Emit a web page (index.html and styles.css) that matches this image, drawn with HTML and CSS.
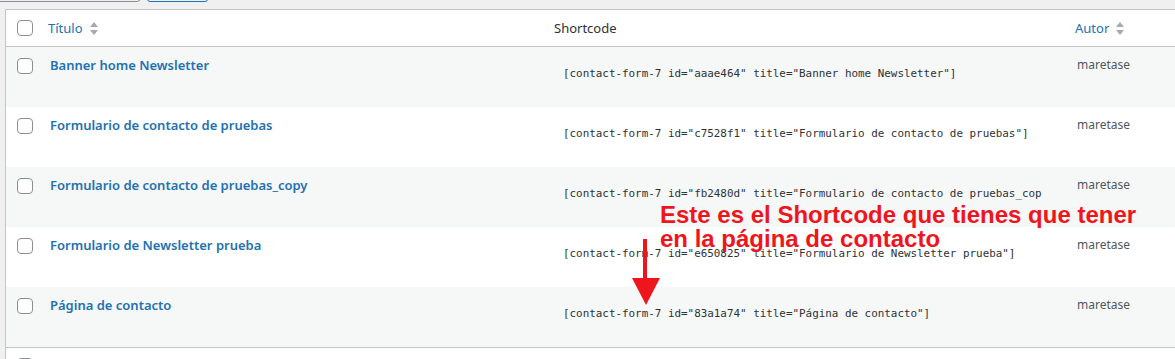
FILE: index.html
```html
<!DOCTYPE html>
<html lang="es">
<head>
    <meta charset="UTF-8">
    <title>Formularios de contacto</title>
    <link rel="stylesheet" href="styles.css">
</head>
<body>
    <div class="tablenav">
        <span class="search-input"></span>
        <span class="search-button"></span>
    </div>

    <div class="list-table">
        <div class="row head">
            <div class="cell check"><span class="cb"></span></div>
            <div class="cell title">
                <a href="#">Título</a>
                <svg class="sort" width="8" height="14" viewBox="0 0 8 14"><path d="M4 0 L8 5 L0 5 Z M0 8 L8 8 L4 13 Z" fill="#a7aaad"/></svg>
            </div>
            <div class="cell shortcode">Shortcode</div>
            <div class="cell author">
                <a href="#">Autor</a>
                <svg class="sort" width="8" height="14" viewBox="0 0 8 14"><path d="M4 0 L8 5 L0 5 Z M0 8 L8 8 L4 13 Z" fill="#a7aaad"/></svg>
            </div>
        </div>

        <div class="row item alt">
            <div class="cell check"><span class="cb"></span></div>
            <div class="cell title"><a href="#">Banner home Newsletter</a></div>
            <div class="cell shortcode"><span class="code">[contact-form-7 id="aaae464" title="Banner home Newsletter"]</span></div>
            <div class="cell author">maretase</div>
        </div>
        <div class="row item">
            <div class="cell check"><span class="cb"></span></div>
            <div class="cell title"><a href="#">Formulario de contacto de pruebas</a></div>
            <div class="cell shortcode"><span class="code">[contact-form-7 id="c7528f1" title="Formulario de contacto de pruebas"]</span></div>
            <div class="cell author">maretase</div>
        </div>
        <div class="row item alt">
            <div class="cell check"><span class="cb"></span></div>
            <div class="cell title"><a href="#">Formulario de contacto de pruebas_copy</a></div>
            <div class="cell shortcode"><span class="code">[contact-form-7 id="fb2480d" title="Formulario de contacto de pruebas_copy"]</span></div>
            <div class="cell author">maretase</div>
        </div>
        <div class="row item">
            <div class="cell check"><span class="cb"></span></div>
            <div class="cell title"><a href="#">Formulario de Newsletter prueba</a></div>
            <div class="cell shortcode"><span class="code">[contact-form-7 id="e650825" title="Formulario de Newsletter prueba"]</span></div>
            <div class="cell author">maretase</div>
        </div>
        <div class="row item alt">
            <div class="cell check"><span class="cb"></span></div>
            <div class="cell title"><a href="#">Página de contacto</a></div>
            <div class="cell shortcode"><span class="code">[contact-form-7 id="83a1a74" title="Página de contacto"]</span></div>
            <div class="cell author">maretase</div>
        </div>

        <div class="row head foot">
            <div class="cell check"><span class="cb"></span></div>
            <div class="cell title">
                <a href="#">Título</a>
                <svg class="sort" width="8" height="14" viewBox="0 0 8 14"><path d="M4 0 L8 5 L0 5 Z M0 8 L8 8 L4 13 Z" fill="#a7aaad"/></svg>
            </div>
            <div class="cell shortcode">Shortcode</div>
            <div class="cell author">
                <a href="#">Autor</a>
                <svg class="sort" width="8" height="14" viewBox="0 0 8 14"><path d="M4 0 L8 5 L0 5 Z M0 8 L8 8 L4 13 Z" fill="#a7aaad"/></svg>
            </div>
        </div>
    </div>

    <!-- nota en rojo encima de la captura -->
    <div class="note">
        <p>Este es el Shortcode que tienes que tener<br>en la página de contacto</p>
        <svg class="arrow" width="30" height="68" viewBox="0 0 30 68"><rect x="12" y="0" width="4" height="40" fill="#ee151d"/><path d="M1 39 L29 39 L15 66 Z" fill="#ee151d"/></svg>
    </div>
</body>
</html>
```

FILE: styles.css
```css
body {
    margin: 0;
    background-color: #f0f0f1;
    font-family: "Noto Sans", "Open Sans", sans-serif;
    font-size: 12px;
    color: #3c434a;
    overflow: hidden;
    height: 359px;
    position: relative;
}
.tablenav {
    display: flex;
    margin-top: -28px;
    height: 30px;
}
.search-input {
    width: 150px;
    margin-left: -9px;
    border: 1px solid #8c8f94;
    border-radius: 4px;
    box-sizing: border-box;
}
.search-button {
    width: 61px;
    margin-left: 6px;
    border: 1px solid #2271b1;
    border-radius: 3px;
    box-sizing: border-box;
}
.list-table {
    margin: 7px 0 0 5px;
    width: 1200px;
    background-color: #fff;
    border: 1px solid #c3c4c7;
}
.row {
    display: grid;
    grid-template-columns: 34px 506px 521px 1fr;
}
.row.head {
    height: 36px;
    border-bottom: 1px solid #c3c4c7;
}
.row.foot {
    border-bottom: none;
    border-top: 1px solid #c3c4c7;
}
.row.item {
    height: 60px;
}
.row.alt {
    background-color: #f6f7f7;
}
.cell {
    box-sizing: border-box;
}
.cb {
    display: block;
    width: 16px;
    height: 16px;
    box-sizing: border-box;
    border: 1px solid #8c8f94;
    border-radius: 4px;
    background: #fff;
}
.check {
    padding: 10px 0 0 11px;
}
.item .check {
    padding-top: 11px;
}
.head .cell {
    display: flex;
    align-items: center;
    padding-left: 8px;
    font-size: 13px;
    color: #2c3338;
}
.head .check {
    display: block;
    padding-left: 11px;
}
.head a {
    color: #2271b1;
    text-decoration: none;
}
.head .sort {
    margin-left: 7px;
    margin-top: 1px;
}
.item .title {
    padding: 8px 10px 0;
}
.item .title a {
    font-size: 13px;
    font-weight: 600;
    line-height: 20px;
    color: #2271b1;
    text-decoration: none;
}
.item .shortcode {
    padding: 18px 0 0 9px;
}
.code {
    display: block;
    width: 487px;
    box-sizing: border-box;
    padding-left: 8px;
    overflow: hidden;
    white-space: nowrap;
    font-family: "DejaVu Sans Mono", monospace;
    font-size: 10.9px;
    line-height: 17px;
    color: #2c3338;
}
.item .author {
    padding: 9px 10px 0;
    line-height: 18px;
    color: #50575e;
}
.note {
    position: absolute;
    left: 660px;
    top: 203px;
}
.note p {
    margin: 0;
    font-family: "Liberation Sans", Arial, sans-serif;
    font-weight: bold;
    font-size: 24px;
    line-height: 24px;
    color: #ee151d;
    white-space: nowrap;
}
.arrow {
    position: absolute;
    left: -29px;
    top: 36px;
}
```
